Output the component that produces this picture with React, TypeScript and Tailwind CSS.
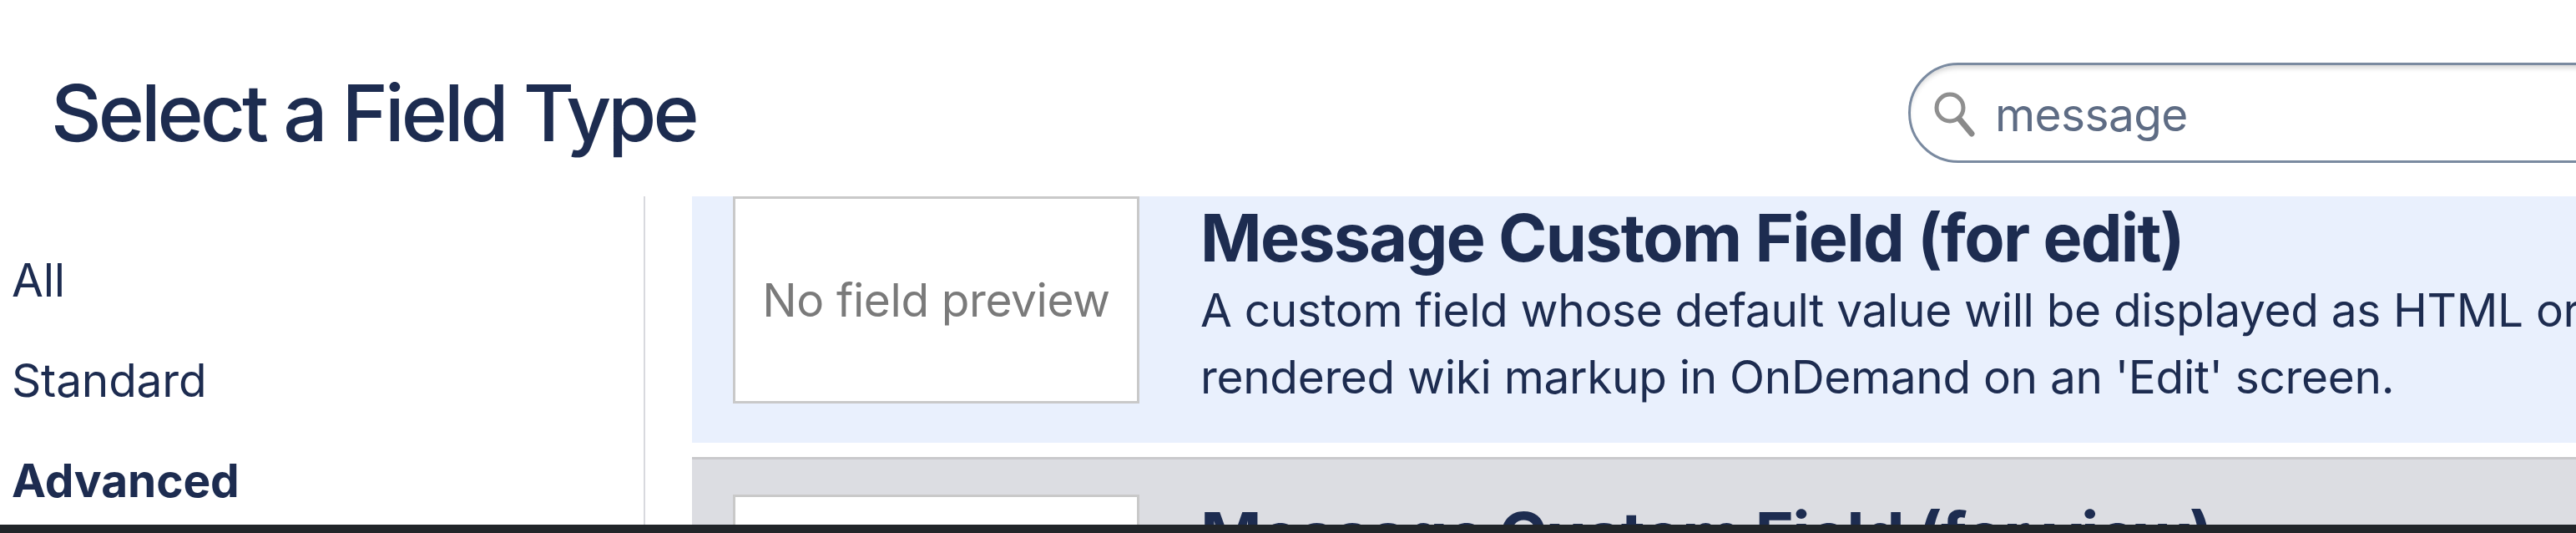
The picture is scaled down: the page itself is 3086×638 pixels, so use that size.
export default function App() {
  const font = { fontFamily: 'Inter, "Liberation Sans", sans-serif' };
  return (
    <div style={font} className="flex h-[638px] w-[3086px] flex-col overflow-hidden bg-white text-[#1d2c50]">
      <header className="flex h-[235px] shrink-0 items-start overflow-hidden">
        <h1 className="ml-[61px] mt-[75px] text-[94px] leading-[120px] font-medium tracking-[-4px]">Select a Field Type</h1>
        <div className="ml-auto mt-[75px] flex h-[120px] w-[1000px] -mr-[200px] shrink-0 items-center rounded-l-[60px] rounded-r-[60px] border-[3px] border-[#7a8aa0] bg-white pl-[27px] shadow-[inset_0_6px_6px_-3px_rgba(0,0,0,0.18)]">
          <svg width="54" height="56" viewBox="0 0 54 56" fill="none" className="mt-[2px] shrink-0 blur-[0.6px]">
            <circle cx="20" cy="21" r="16" stroke="#8f8f8f" strokeWidth="5" />
            <path d="M31 34 L46 52" stroke="#8a8a8a" strokeWidth="7" strokeLinecap="round" />
          </svg>
          <span className="ml-[20px] mt-[4px] text-[55px] leading-none tracking-[-0.6px] text-[#5e6c84]">message</span>
        </div>
      </header>
      <div className="flex min-h-0 flex-1">
        <nav className="w-[773px] shrink-0 border-r-2 border-[#d8d9de] pl-[14px] pt-[70px]">
          <div className="flex h-[120px] items-start text-[55px] leading-[60px] tracking-[-0.2px]">All</div>
          <div className="flex h-[120px] items-start text-[55px] leading-[60px] tracking-[-0.2px]">Standard</div>
          <div className="flex h-[120px] items-start text-[55px] leading-[60px] font-bold tracking-[-0.1px]">Advanced</div>
        </nav>
        <main className="ml-[56px] flex min-w-0 flex-1 flex-col overflow-hidden">
          <section className="flex h-[295px] shrink-0 items-start bg-[#e9f0fd] pl-[49px]">
            <div className="flex h-[248px] w-[487px] shrink-0 items-center justify-center border-[3px] border-[#c9c9c9] bg-white text-[55px] leading-none tracking-[-0.4px] text-[#7a7a7a]">
              No field preview
            </div>
            <div className="ml-[73px] w-[1800px] shrink-0">
              <h2 className="mt-[5px] text-[79px] leading-[88px] font-bold tracking-[-1.7px]">Message Custom Field (for edit)</h2>
              <p className="mt-[3px] text-[55px] leading-[80px] tracking-[-0.34px]">
                A custom field whose default value will be displayed as HTML or
                <br />
                rendered wiki markup in OnDemand on an 'Edit' screen.
              </p>
            </div>
          </section>
          <section className="mt-[17px] flex h-[200px] shrink-0 items-start border-t-[3px] border-[#c9c9cc] bg-[#dcdde2] pl-[49px] pt-[42px]">
            <div className="h-[248px] w-[487px] shrink-0 border-[3px] border-[#c9c9c9] bg-white" />
            <h2 className="ml-[73px] mt-[5px] text-[79px] leading-[88px] font-bold tracking-[-1.7px] whitespace-nowrap">Message Custom Field (for view)</h2>
          </section>
        </main>
      </div>
      <div className="h-[10px] shrink-0 bg-[#212529]" />
    </div>
  );
}
